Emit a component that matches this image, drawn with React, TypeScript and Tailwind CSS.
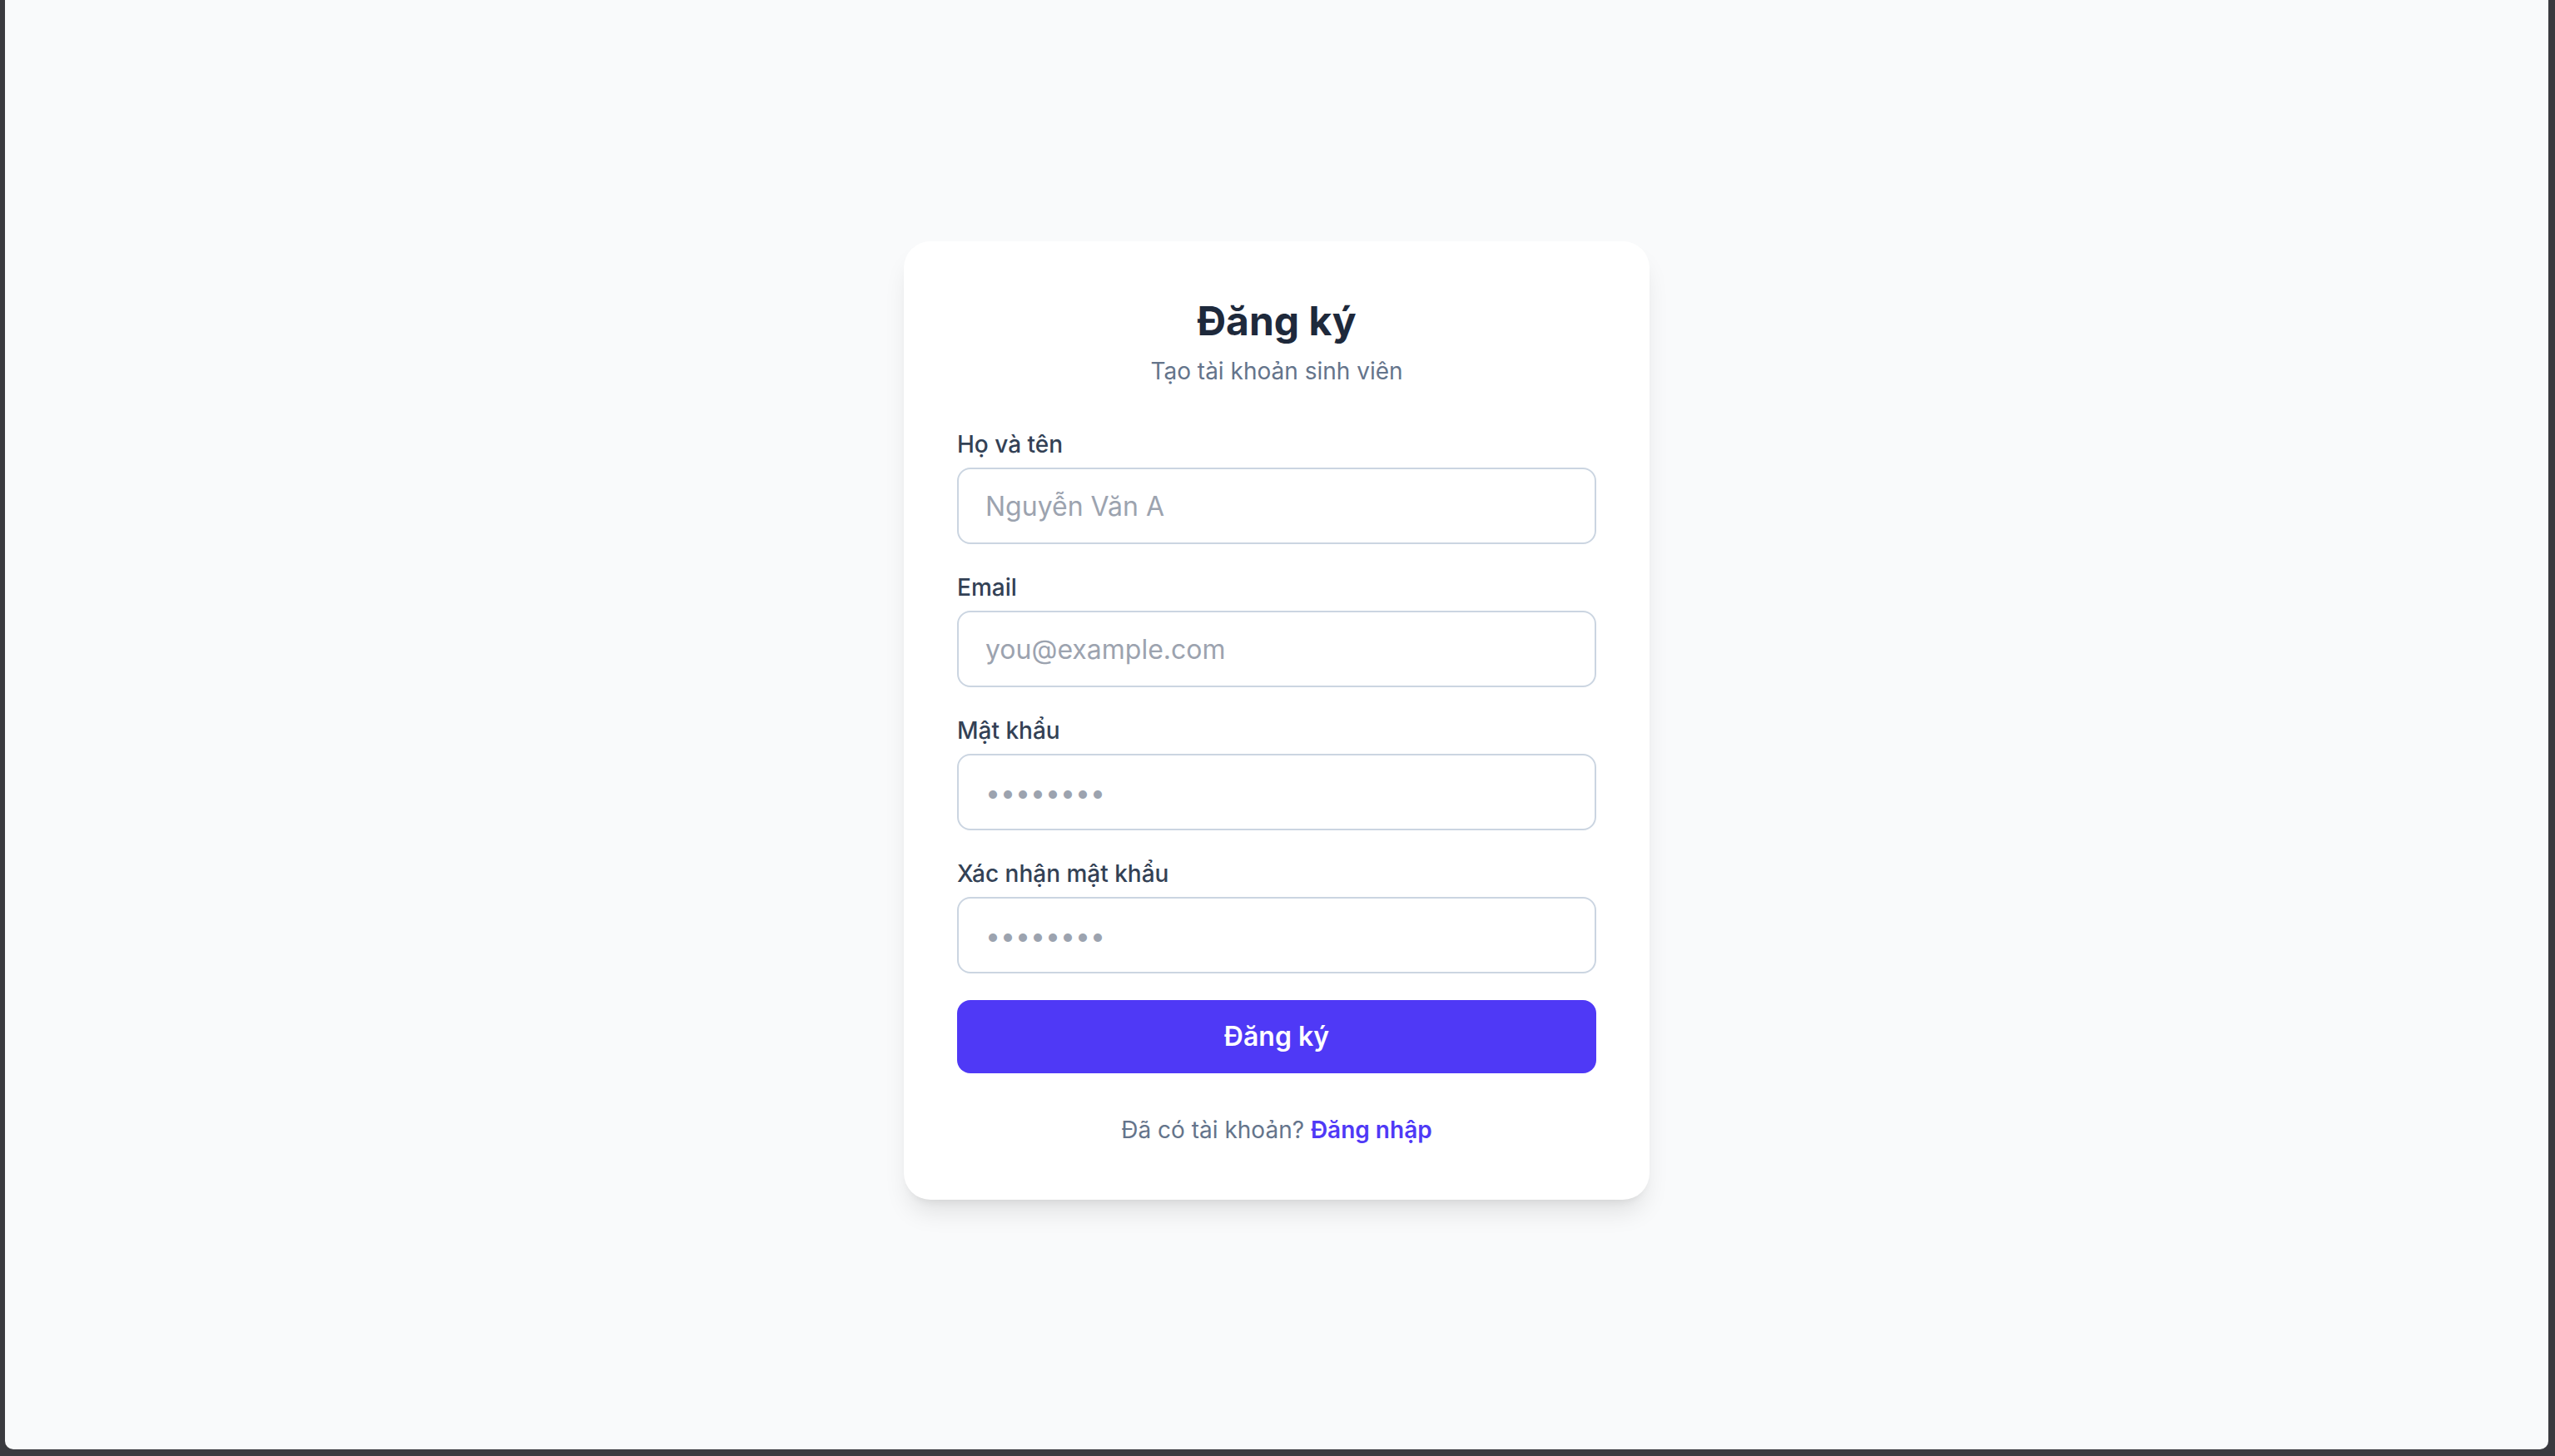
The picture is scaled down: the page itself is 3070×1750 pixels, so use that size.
import { useState } from 'react';

interface Field {
  id: string;
  label: string;
  type: string;
  placeholder: string;
}

const fields: Field[] = [
  { id: 'fullname', label: 'Họ và tên', type: 'text', placeholder: 'Nguyễn Văn A' },
  { id: 'email', label: 'Email', type: 'email', placeholder: 'you@example.com' },
  { id: 'password', label: 'Mật khẩu', type: 'password', placeholder: '••••••••' },
  { id: 'confirm', label: 'Xác nhận mật khẩu', type: 'password', placeholder: '••••••••' },
];

export default function App() {
  const [values, setValues] = useState<Record<string, string>>({});

  return (
    <div className="h-[1750px] w-full bg-[#3a3a3f] pl-[6px] pr-[8px] pb-[8px] font-['Inter',sans-serif]">
      <div className="h-full w-full rounded-b-[10px] bg-[#f9fafb] flex items-center justify-center pb-[10px]">
        {/* Card */}
        <div className="w-[896px] bg-white rounded-[32px] p-[64px] shadow-[0_20px_30px_-6px_rgba(0,0,0,0.1),0_8px_12px_-8px_rgba(0,0,0,0.1)]">
          {/* Header */}
          <div className="text-center mb-[48px]">
            <h1 className="text-[48px] leading-[64px] font-bold text-[#1e293b]">Đăng ký</h1>
            <p className="mt-[8px] text-[28px] leading-[40px] text-[#64748b]">Tạo tài khoản sinh viên</p>
          </div>

          <form className="flex flex-col gap-[32px]" onSubmit={(e) => e.preventDefault()}>
            {fields.map((f) => (
              <div key={f.id}>
                <label htmlFor={f.id} className="block mb-[8px] text-[28px] leading-[40px] font-medium text-[#334155]">
                  {f.label}
                </label>
                <input
                  id={f.id}
                  type={f.type}
                  placeholder={f.placeholder}
                  value={values[f.id] || ''}
                  onChange={(e) => setValues({ ...values, [f.id]: e.target.value })}
                  className="block w-full h-[92px] px-[32px] rounded-[16px] border-2 border-[#cbd5e1] bg-white text-[32px] text-[#1e293b] placeholder:text-[#9ca3af] outline-none"
                />
              </div>
            ))}

            <button
              type="submit"
              className="w-full h-[88px] rounded-[16px] bg-[#4f39f6] text-white text-[32px] font-semibold"
            >
              Đăng ký
            </button>
          </form>

          <p className="mt-[48px] text-center text-[28px] leading-[40px] text-[#64748b]">
            Đã có tài khoản?{' '}
            <a href="#" className="font-semibold text-[#4f39f6]">
              Đăng nhập
            </a>
          </p>
        </div>
      </div>
    </div>
  );
}
